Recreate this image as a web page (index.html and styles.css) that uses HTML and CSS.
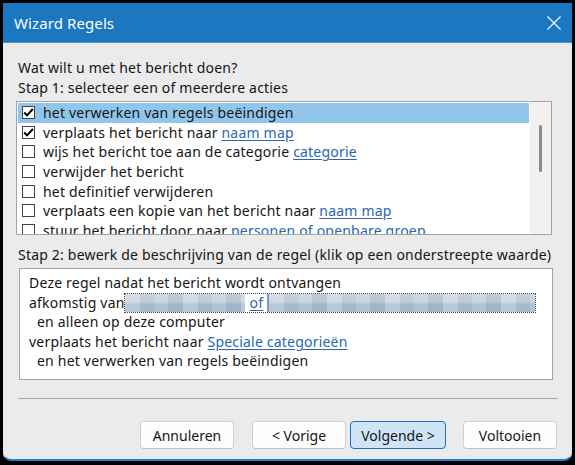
FILE: index.html
```html
<!DOCTYPE html>
<html lang="nl">
<head>
<meta charset="utf-8">
<title>Wizard Regels</title>
<link rel="stylesheet" href="styles.css">
</head>
<body>
<div class="window">
  <div class="titlebar">
    <span class="title">Wizard Regels</span>
    <svg class="close" width="14" height="14" viewBox="0 0 14 14"><path d="M0.5 0.5 L13.5 13.5 M13.5 0.5 L0.5 13.5" stroke="#fff" stroke-width="1.1" fill="none"/></svg>
  </div>
  <div class="content">
    <div class="label first">Wat wilt u met het bericht doen?</div>
    <div class="label">Stap 1: selecteer een of meerdere acties</div>
    <div class="list">
      <div class="rows">
        <div class="row selected"><span class="cb"><svg width="13" height="13" viewBox="0 0 13 13"><path d="M2.2 6.5 L5 9.4 L10.9 3" stroke="#000" stroke-width="2" fill="none"/></svg></span><span>het verwerken van regels beëindigen</span></div>
        <div class="row"><span class="cb"><svg width="13" height="13" viewBox="0 0 13 13"><path d="M2.2 6.5 L5 9.4 L10.9 3" stroke="#000" stroke-width="2" fill="none"/></svg></span><span>verplaats het bericht naar <a class="lnk">naam map</a></span></div>
        <div class="row"><span class="cb"></span><span>wijs het bericht toe aan de categorie <a class="lnk">categorie</a></span></div>
        <div class="row"><span class="cb"></span><span>verwijder het bericht</span></div>
        <div class="row"><span class="cb"></span><span>het definitief verwijderen</span></div>
        <div class="row"><span class="cb"></span><span>verplaats een kopie van het bericht naar <a class="lnk">naam map</a></span></div>
        <div class="row"><span class="cb"></span><span>stuur het bericht door naar <a class="lnk">personen of openbare groep</a></span></div>
      </div>
      <div class="scrollbar"><div class="thumb"></div></div>
    </div>
    <div class="label step2">Stap 2: bewerk de beschrijving van de regel (klik op een onderstreepte waarde)</div>
    <div class="desc">
      <div class="dline">Deze regel nadat het bericht wordt ontvangen</div>
      <div class="dline">afkomstig van<span class="masked"><span class="blur b1"></span><a class="lnk of">of </a><span class="blur b2"></span></span></div>
      <div class="dline ind">en alleen op deze computer</div>
      <div class="dline">verplaats het bericht naar <a class="lnk">Speciale categorieën</a></div>
      <div class="dline ind">en het verwerken van regels beëindigen</div>
    </div>
    <div class="sep"></div>
    <div class="buttons">
      <button class="btn">Annuleren</button>
      <button class="btn prev">&lt; Vorige</button>
      <button class="btn default">Volgende &gt;</button>
      <button class="btn finish">Voltooien</button>
    </div>
  </div>
</div>
</body>
</html>
```

FILE: styles.css
```css
* { box-sizing: border-box; }
html, body { margin: 0; padding: 0; }
body {
  width: 575px;
  height: 465px;
  background: #000;
  font-family: "Noto Sans", "DejaVu Sans", sans-serif;
  font-size: 14px;
  letter-spacing: 0.2px;
  color: #151515;
  overflow: hidden;
}
.window {
  margin: 3px 3px 0 3px;
  height: 458px;
  background: #ebebeb;
  border-left: 1px solid #dfe6ee;
  border-right: 1px solid #dfe6ee;
  border-bottom: 2px solid #1f7fd2;
  border-radius: 0 0 8px 8px;
  display: flex;
  flex-direction: column;
}
.titlebar {
  height: 40px;
  background: #1b77c0;
  color: #fff;
  display: flex;
  align-items: center;
  justify-content: space-between;
  padding: 0 10px 0 11px;
  margin: 0 -1px;
  border-bottom: 1px solid #4b95cf;
}
.title { font-size: 15px; letter-spacing: 0.1px; }
.close { margin-right: 1px; }
.content { display: flex; flex-direction: column; }
.label {
  line-height: 20px;
  height: 20px;
  margin-left: 14px;
  white-space: nowrap;
}
.label.first { margin-top: 15px; }
.list {
  margin-top: 3px;
  margin-left: 12px;
  width: 536px;
  height: 134px;
  border: 1px solid #a3a3a3;
  background: #fff;
  display: flex;
  overflow: hidden;
}
.rows { flex: 1; padding: 1px 0 0 1px; overflow: hidden; }
.row {
  height: 19.6px;
  display: flex;
  align-items: center;
  padding-left: 4px;
  white-space: nowrap;
}
.row.selected { background: #91c5ec; }
.cb {
  width: 13px;
  height: 13px;
  border: 1px solid #444;
  background: #fff;
  margin-right: 8px;
  flex: none;
  position: relative;
}
.cb svg { position: absolute; left: -1px; top: -1px; }
.lnk { color: #2a67b0; text-decoration: underline; text-underline-offset: 2px; }
.scrollbar {
  width: 22px;
  flex: none;
  background: #f1f1f1;
  border-left: 1px solid #fbfbfb;
  display: flex;
  justify-content: center;
  padding-top: 23px;
}
.thumb { width: 3px; height: 47px; border-radius: 2px; background: #8a8a8a; }
.step2 { margin-top: 10px; }
.desc {
  margin-top: 3px;
  margin-left: 15px;
  width: 534px;
  height: 112px;
  border: 1px solid #a3a3a3;
  background: #fff;
  padding: 4px 0 0 9px;
}
.dline { height: 19.6px; line-height: 19.6px; white-space: nowrap; }
.dline.ind { padding-left: 8px; }
.masked {
  display: inline-flex;
  vertical-align: top;
  height: 20px;
  width: 412px;
  margin-left: -1px;
  border: 1px dotted #444;
}
.blur {
  height: 100%;
  background:
    repeating-linear-gradient(90deg, rgba(255,255,255,0.18) 0 15px, rgba(90,110,130,0.06) 15px 29px, rgba(255,255,255,0.08) 29px 43px, rgba(80,100,120,0.1) 43px 58px),
    linear-gradient(#cbd6df 0, #c6d2dc 45%, #aabfd1 55%, #a8bdcf 100%);
}
.b1 { width: 120px; flex: none; }
.of { background: #fff; padding: 0 4px 0 5px; line-height: 18px; align-self: flex-end; }
.b2 { flex: 1; border-left: 2px solid #8c8fd6; }
.sep {
  margin-top: 18px;
  margin-left: 14px;
  width: 540px;
  height: 1px;
  background: #a7a7a7;
}
.buttons {
  margin-top: 22px;
  display: flex;
  padding-left: 136px;
}
.btn {
  width: 94px;
  height: 28px;
  border: 1px solid #d0d0d0;
  border-bottom-color: #c2c2c2;
  border-radius: 4px;
  background: #fdfdfd;
  font-family: "Noto Sans", "DejaVu Sans", sans-serif;
  font-size: 14px;
  color: #151515;
  padding: 0;
}
.btn.prev { margin-left: 18px; }
.btn.default {
  margin-left: 4px;
  width: 96px;
  background: #cfe4f6;
  border: 1px solid #1a6fc0;
}
.btn.finish { margin-left: 17px; }
```
